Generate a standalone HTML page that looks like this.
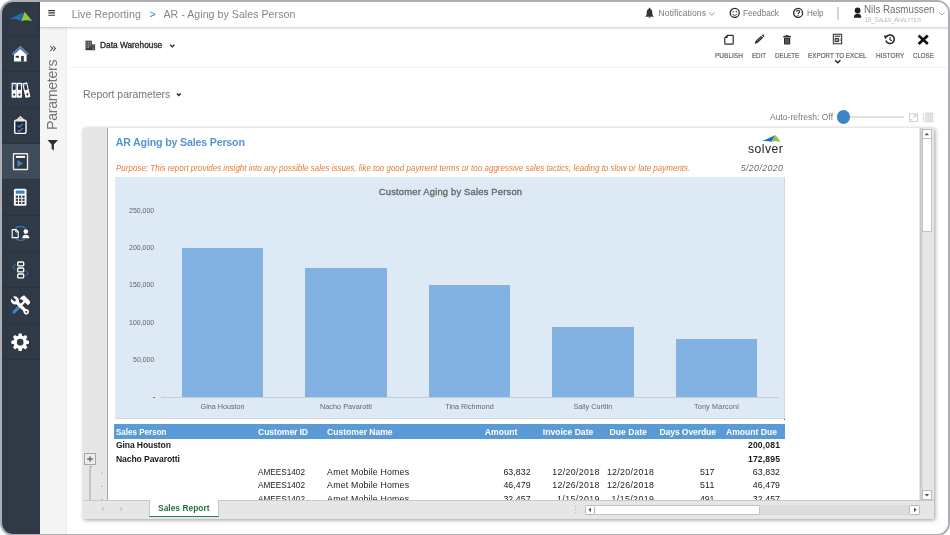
<!DOCTYPE html>
<html><head><meta charset="utf-8"><title>AR - Aging by Sales Person</title>
<style>
html,body{margin:0;padding:0;}
body{width:950px;height:535px;overflow:hidden;background:#fff;font-family:"Liberation Sans",sans-serif;position:relative;}
.t{position:absolute;white-space:nowrap;line-height:1;}
.abs{position:absolute;}
#frame{position:absolute;left:0;top:0;width:950px;height:535.6px;box-sizing:border-box;border:2px solid #adafb4;border-left-width:2.2px;border-bottom-width:2.6px;border-right-width:2.8px;border-radius:13px;overflow:hidden;background:#fff;}
#in{position:absolute;left:-2.2px;top:-2px;width:950px;height:535px;will-change:transform;}
#side{position:absolute;left:0;top:0;width:40px;height:535px;background:#2f3a46;}
#side .sel{position:absolute;left:0;top:144px;width:40px;height:35px;background:#3f4c5a;}
#side .dv{position:absolute;left:0;width:40px;height:1px;background:#2a343f;}
#params{position:absolute;left:40px;top:27px;width:27px;height:508px;background:#f5f5f5;border-right:1px solid #ececec;box-sizing:border-box;}
#top{position:absolute;left:40px;top:0;width:910px;height:27px;background:#fff;box-shadow:0 0.5px 2.5px rgba(0,0,0,0.22);}
#tbline{position:absolute;left:67px;top:67px;width:883px;height:1px;background:#f2f2f2;}
#widget{position:absolute;left:82.6px;top:128.1px;width:851.5px;height:391px;background:#e6e6e6;box-shadow:0.8px 0.8px 4px rgba(0,0,0,0.40);}
#grid{position:absolute;left:24.8px;top:0.4px;width:812.1px;height:371.2px;background:#fff;border-left:1px solid #a8a8a8;box-sizing:border-box;overflow:hidden;}
#gi{position:absolute;left:-108.4px;top:-128.5px;width:950px;height:535px;}
</style></head><body>
<div id="frame"><div id="in">
<div id="side"><div class="sel"></div>
<div class="dv" style="top:35px"></div><div class="dv" style="top:71px"></div><div class="dv" style="top:107px"></div><div class="dv" style="top:143px"></div><div class="dv" style="top:179px"></div><div class="dv" style="top:215px"></div><div class="dv" style="top:251px"></div><div class="dv" style="top:287px"></div><div class="dv" style="top:323px"></div><div class="dv" style="top:359px"></div>
<svg class="abs" style="left:0;top:0" width="40" height="400" viewBox="0 0 40 400">
<!-- logo -->
<path d="M9.1 19.6 L23.5 12.3 L20.3 20.7 C17.4 18.6 13 18.7 9.1 19.6Z" fill="#1f6fb8"/>
<path d="M24.5 11.8 L32.3 21 C28.6 19.9 24.6 20 21 21.1Z" fill="#8cc63f"/>
<!-- home -->
<path d="M12.2 54.4 L20.3 47 L28.4 54.4" fill="none" stroke="#5a8fc9" stroke-width="1.7" stroke-linejoin="miter"/>
<path d="M14 54.4 L20.3 49 L26.6 54.4 V61.6 H14Z" fill="#fff"/>
<rect x="15.7" y="55.8" width="3.3" height="1.9" fill="#2f3a46"/>
<rect x="21.1" y="56" width="2.7" height="5.6" fill="#2f3a46"/>
<!-- binders -->
<rect x="11.6" y="82.7" width="5.1" height="15" rx="0.7" fill="#fff"/><rect x="12.799999999999999" y="84.2" width="2.8" height="5.7" fill="#1f2c3b"/><rect x="12.799999999999999" y="84.2" width="2.8" height="2" fill="#3d74b0"/><circle cx="14.2" cy="94.60000000000001" r="1.05" fill="#1a222c"/>
<rect x="16.9" y="82.7" width="5.1" height="15" rx="0.7" fill="#fff"/><rect x="18.099999999999998" y="84.2" width="2.8" height="5.7" fill="#1f2c3b"/><rect x="18.099999999999998" y="84.2" width="2.8" height="2" fill="#3d74b0"/><circle cx="19.5" cy="94.60000000000001" r="1.05" fill="#1a222c"/>
<g transform="rotate(-13 26.4 90.2)"><rect x="23.8" y="82.6" width="5.1" height="15" rx="0.7" fill="#fff"/><rect x="25.0" y="84.1" width="2.8" height="5.7" fill="#1f2c3b"/><rect x="25.0" y="84.1" width="2.8" height="2" fill="#3d74b0"/><circle cx="26.400000000000002" cy="94.5" r="1.05" fill="#1a222c"/></g>
<!-- clipboard -->
<rect x="14.7" y="120.1" width="11.3" height="13.3" rx="1.5" fill="#1e2935" stroke="#fff" stroke-width="1.4"/>
<path d="M16.3 121.4 V119.7 L20.4 115.8 L24.5 119.7 V121.4Z" fill="#e2e5e8"/><circle cx="20.4" cy="118.2" r="0.55" fill="#59626c"/>
<path d="M17.5 125.6 L19.2 127.1 L23 123.7 M17.5 130 L19.2 131.5 L23 128.1" fill="none" stroke="#4a80bc" stroke-width="1.35"/>
<!-- report -->
<rect x="13.5" y="153.7" width="14" height="15.8" rx="0.5" fill="#2c3641" stroke="#e6e9ec" stroke-width="1.4"/>
<rect x="15.9" y="155.9" width="9.2" height="2" fill="#fff"/>
<path d="M17.4 160 L23.2 163.4 L17.4 166.8Z" fill="#4583c4"/>
<!-- calculator -->
<rect x="13.9" y="188.7" width="12.6" height="17.1" rx="1.6" fill="#fff"/>
<rect x="15.8" y="190.6" width="8.8" height="3.2" rx="0.6" fill="#3f7fc4"/>
<g fill="#2f3a46"><rect x="15.8" y="195.6" width="2.2" height="2.2"/><rect x="19.1" y="195.6" width="2.2" height="2.2"/><rect x="22.4" y="195.6" width="2.2" height="2.2"/>
<rect x="15.8" y="198.7" width="2.2" height="2.2"/><rect x="19.1" y="198.7" width="2.2" height="2.2"/><rect x="22.4" y="198.7" width="2.2" height="2.2"/>
<rect x="15.8" y="201.8" width="2.2" height="2.2"/><rect x="19.1" y="201.8" width="2.2" height="2.2"/><rect x="22.4" y="201.8" width="2.2" height="2.2"/></g>
<!-- doc-user -->
<circle cx="20.5" cy="233.4" r="7" fill="none" stroke="#3a78b8" stroke-width="1.3"/>
<rect x="11" y="228.8" width="8.2" height="9.6" fill="#2f3a46"/>
<rect x="22" y="228.6" width="8" height="10" fill="#2f3a46"/>
<path d="M12.2 229.6 H16 L18.2 231.8 V237.6 H12.2Z" fill="none" stroke="#fff" stroke-width="1.1"/><path d="M15.8 229.6 V232 H18.2" fill="none" stroke="#fff" stroke-width="0.9"/>
<circle cx="25.8" cy="231.6" r="2.3" fill="#fff"/><path d="M22.2 238.2 C22.2 233.6 29.4 233.6 29.4 238.2Z" fill="#fff"/>
<!-- flow -->
<g fill="none" stroke="#fff" stroke-width="1.35"><rect x="17.7" y="262" width="6" height="3.9" rx="0.9"/><rect x="17.7" y="268" width="6" height="3.9" rx="0.9"/><rect x="17.7" y="274" width="6" height="3.9" rx="0.9"/></g>
<path d="M15.8 265 C12.4 264.6 12.4 269.2 15.6 269.2" fill="none" stroke="#3a78b8" stroke-width="1"/>
<path d="M25.6 271.2 C28.8 271.2 28.8 275.4 25.8 275.2" fill="none" stroke="#3a78b8" stroke-width="1"/>
<!-- tools -->
<g transform="translate(20.3 305.8) rotate(45)"><rect x="-1.45" y="1.4" width="2.9" height="9" rx="1.2" fill="#3f86d0"/><rect x="-1.2" y="-6.4" width="2.4" height="8.4" fill="#fff"/><path d="M-4.8 -10.2 H2.6 C4 -10.2 5 -9.2 5 -7.6 V-5.8 H-2.2 C-3.4 -5.8 -4.4 -5.2 -5.2 -4 C-5.8 -6.2 -5.6 -8.4 -4.8 -10.2Z" fill="#fff"/></g>
<g transform="translate(20.3 305.8) rotate(-45)"><rect x="-1.65" y="-6.4" width="3.3" height="14.4" fill="#fff"/><circle cx="0" cy="-7.6" r="3.9" fill="#fff"/><rect x="-1.3" y="-12" width="2.6" height="5" fill="#2f3a46"/><circle cx="0" cy="8.4" r="2.7" fill="#fff"/><circle cx="0" cy="8.6" r="1" fill="#2f3a46"/></g>
<!-- gear -->
<g transform="translate(20.2 342.2)"><circle r="5" fill="none" stroke="#fff" stroke-width="3.3"/>
<g fill="#fff"><path d="M-1.5 -8.8 H1.5 L2 -5.6 H-2Z M-1.5 8.8 H1.5 L2 5.6 H-2Z"/><path d="M-1.5 -8.8 H1.5 L2 -5.6 H-2Z M-1.5 8.8 H1.5 L2 5.6 H-2Z" transform="rotate(45)"/><path d="M-1.5 -8.8 H1.5 L2 -5.6 H-2Z M-1.5 8.8 H1.5 L2 5.6 H-2Z" transform="rotate(90)"/><path d="M-1.5 -8.8 H1.5 L2 -5.6 H-2Z M-1.5 8.8 H1.5 L2 5.6 H-2Z" transform="rotate(135)"/></g>
</g>
</svg>
</div>
<div id="params"></div>
<div id="top"></div>
<div id="tbline"></div>
<svg class="abs" style="left:48px;top:9px" width="8" height="8" viewBox="0 0 8 8"><path d="M0.3 1.6H7 M0.3 3.9H7 M0.3 6.2H7" stroke="#333" stroke-width="1.1"/></svg>
<span class="t" style="left:71.70px;top:9.23px;font-size:10.6px;color:#858585;letter-spacing:0.065px;">Live Reporting</span>
<span class="t" style="left:149.50px;top:9.31px;font-size:10.5px;color:#3b82c4;">&gt;</span>
<span class="t" style="left:163.40px;top:9.23px;font-size:10.6px;color:#858585;letter-spacing:0.048px;">AR - Aging by Sales Person</span>
<svg class="abs" style="left:645.4px;top:6.6px" width="9.6" height="12" viewBox="0 0 11 12" preserveAspectRatio="none"><path d="M5.2 0.8 C5.9 0.8 6 1.4 6 1.8 C8 2.4 8.4 4.2 8.4 6 C8.4 7.6 9 8.6 9.8 9.2 V9.8 H0.6 V9.2 C1.4 8.6 2 7.6 2 6 C2 4.2 2.4 2.4 4.4 1.8 C4.4 1.4 4.5 0.8 5.2 0.8Z M4.2 10.3 H6.2 C6.2 11.5 4.2 11.5 4.2 10.3Z" fill="#333"/></svg>
<span class="t" style="left:658.60px;top:9.00px;font-size:8.5px;color:#777;letter-spacing:0.084px;">Notifications</span>
<svg class="abs" style="left:708px;top:11px" width="8" height="6" viewBox="0 0 8 6"><path d="M1.2 1.6 L3.9 4.2 L6.6 1.6" fill="none" stroke="#888" stroke-width="0.9"/></svg>
<svg class="abs" style="left:729px;top:6.6px" width="12" height="12" viewBox="0 0 12 12"><circle cx="5.7" cy="5.9" r="4.5" fill="none" stroke="#2b2b2b" stroke-width="1.3"/><circle cx="4.1" cy="4.7" r="0.75" fill="#333"/><circle cx="7.3" cy="4.7" r="0.75" fill="#333"/><path d="M3.3 6.8 C4.2 8.8 7.2 8.8 8.1 6.8" fill="none" stroke="#333" stroke-width="0.9"/></svg>
<span class="t" style="left:743.40px;top:9.00px;font-size:8.5px;color:#777;transform-origin:0 0;transform:scaleX(0.9617);">Feedback</span>
<svg class="abs" style="left:792px;top:6.6px" width="12" height="12" viewBox="0 0 12 12"><circle cx="6.1" cy="5.9" r="4.5" fill="none" stroke="#2b2b2b" stroke-width="1.3"/><path d="M4.5 4.8 C4.5 2.9 7.7 2.9 7.7 4.7 C7.7 5.8 6.1 5.8 6.1 7.1" fill="none" stroke="#333" stroke-width="1.1"/><rect x="5.5" y="7.9" width="1.2" height="1.1" fill="#333"/></svg>
<span class="t" style="left:807.40px;top:9.00px;font-size:8.5px;color:#777;transform-origin:0 0;transform:scaleX(0.9496);">Help</span>
<div class="abs" style="left:837.2px;top:6.5px;width:1.7px;height:13px;background:#d6d6d6"></div>
<svg class="abs" style="left:853px;top:6px" width="9" height="12" viewBox="0 0 9 12"><circle cx="4.6" cy="4.5" r="2.9" fill="#1e1e1e"/><path d="M1 11.7 C0 6.4 9.2 6.4 8.2 11.7Z" fill="#1e1e1e"/></svg>
<span class="t" style="left:863.90px;top:4.57px;font-size:10.2px;color:#6e6e6e;transform-origin:0 0;transform:scaleX(0.9581);">Nils Rasmussen</span>
<span class="t" style="left:864.5px;top:16.70px;font-size:6.5px;color:#b9b9b9;letter-spacing:-0.257px;"><span style="font-size:6.5px">19_S</span><span style="font-size:5.2px">ALES</span><span style="font-size:6.5px">_A</span><span style="font-size:5.2px">NALYTICS</span></span>
<svg class="abs" style="left:938px;top:11px" width="8" height="6" viewBox="0 0 8 6"><path d="M1.4 1.4 L4 4 L6.6 1.4" fill="none" stroke="#999" stroke-width="0.9"/></svg>
<svg class="abs" style="left:49px;top:45px" width="8" height="8" viewBox="0 0 8 8"><path d="M1.4 1.2 L3.6 3.6 L1.4 6 M4.2 1.2 L6.4 3.6 L4.2 6" fill="none" stroke="#555" stroke-width="1.1"/></svg>
<span class="t" style="left:56.9px;top:130.4px;font-size:14.2px;color:#747474;letter-spacing:-0.310px;transform-origin:0 0;transform:rotate(-90deg) translateY(-12.02px);">Parameters</span>
<svg class="abs" style="left:47px;top:139px" width="12" height="13" viewBox="0 0 12 13"><path d="M0.5 1 H11 L6.9 5.6 V11.6 L4.6 9.8 V5.6Z" fill="#2e2e2e"/></svg>
<svg class="abs" style="left:85px;top:40px" width="11" height="11" viewBox="0 0 11 11"><rect x="0.5" y="0.7" width="6.3" height="9.5" fill="#3a3a3a"/><rect x="6.2" y="4.4" width="3.9" height="5.8" fill="#3a3a3a"/><g fill="#ddd"><rect x="1.5" y="1.9" width="1" height="0.8"/><rect x="3.1" y="1.9" width="1" height="0.8"/><rect x="4.7" y="1.9" width="1" height="0.8"/><rect x="1.5" y="3.7" width="1" height="0.8"/><rect x="3.1" y="3.7" width="1" height="0.8"/><rect x="4.7" y="3.7" width="1" height="0.8"/><rect x="1.5" y="5.5" width="1" height="0.8"/><rect x="3.1" y="5.5" width="1" height="0.8"/><rect x="4.7" y="5.5" width="1" height="0.8"/><rect x="1.5" y="7.3" width="1" height="0.8"/><rect x="3.1" y="7.3" width="1" height="0.8"/><rect x="7.6" y="5.6" width="1" height="0.8"/></g><rect x="7.4" y="7.4" width="1.6" height="2.8" fill="#3f7fc4"/></svg>
<span class="t" style="left:100.30px;top:40.84px;font-size:8.7px;color:#2e2e2e;transform-origin:0 0;transform:scaleX(0.9590);-webkit-text-stroke:0.35px #2e2e2e;">Data Warehouse</span>
<svg class="abs" style="left:169px;top:43px" width="7" height="6" viewBox="0 0 7 6"><path d="M1.2 1.8 L3.3 3.9 L5.4 1.8" fill="none" stroke="#222" stroke-width="1.3"/></svg>
<span class="t" style="left:715.00px;top:51.94px;font-size:7.4px;color:#5e5e5e;transform-origin:0 0;transform:scaleX(0.8810);-webkit-text-stroke:0.2px #6a6a6a;">PUBLISH</span>
<span class="t" style="left:751.80px;top:51.94px;font-size:7.4px;color:#5e5e5e;transform-origin:0 0;transform:scaleX(0.8306);-webkit-text-stroke:0.2px #6a6a6a;">EDIT</span>
<span class="t" style="left:775.00px;top:51.94px;font-size:7.4px;color:#5e5e5e;transform-origin:0 0;transform:scaleX(0.8407);-webkit-text-stroke:0.2px #6a6a6a;">DELETE</span>
<span class="t" style="left:807.90px;top:51.94px;font-size:7.4px;color:#5e5e5e;transform-origin:0 0;transform:scaleX(0.8563);-webkit-text-stroke:0.2px #6a6a6a;">EXPORT TO EXCEL</span>
<span class="t" style="left:875.80px;top:51.94px;font-size:7.4px;color:#5e5e5e;transform-origin:0 0;transform:scaleX(0.8644);-webkit-text-stroke:0.2px #6a6a6a;">HISTORY</span>
<span class="t" style="left:912.60px;top:51.94px;font-size:7.4px;color:#5e5e5e;transform-origin:0 0;transform:scaleX(0.8291);-webkit-text-stroke:0.2px #6a6a6a;">CLOSE</span>
<svg class="abs" style="left:722px;top:33px" width="14" height="13" viewBox="0 0 14 13"><path d="M5.4 2.3 H10.4 C10.9 2.3 11.2 2.6 11.2 3.1 V10.4 C11.2 10.9 10.9 11.2 10.4 11.2 H3.6 C3.1 11.2 2.8 10.9 2.8 10.4 V4.9Z" fill="none" stroke="#2b2b2b" stroke-width="1.2" stroke-linejoin="round"/><path d="M5.6 2 V5.1 H2.5Z" fill="#2b2b2b"/></svg>
<svg class="abs" style="left:753.6px;top:34.4px" width="11" height="10.4" viewBox="0 0 13 13" preserveAspectRatio="none"><path d="M0.8 12.2 L1.8 8.8 L8.4 2.2 L10.8 4.6 L4.2 11.2Z" fill="#2b2b2b"/><path d="M3 9.8 L8.8 4" stroke="#bbb" stroke-width="0.7"/><path d="M9.2 1.6 L9.9 0.9 C10.3 0.5 10.8 0.5 11.2 0.9 L12.1 1.8 C12.5 2.2 12.5 2.7 12.1 3.1 L11.4 3.8Z" fill="#2b2b2b"/></svg>
<svg class="abs" style="left:782px;top:34px" width="11" height="12" viewBox="0 0 11 12"><path d="M1.3 3.4 V2.6 C1.3 2.1 1.7 1.8 2.2 1.8 H8 C8.5 1.8 8.9 2.1 8.9 2.6 V3.4Z" fill="#2b2b2b"/><rect x="3.9" y="1.2" width="2.4" height="1" fill="#2b2b2b"/><path d="M2 4 H8.2 V9.8 C8.2 10.2 7.9 10.5 7.5 10.5 H2.7 C2.3 10.5 2 10.2 2 9.8Z" fill="#2b2b2b"/><path d="M4.05 4.6 V9.8 M6.15 4.6 V9.8" stroke="#aaa" stroke-width="0.7"/></svg>
<svg class="abs" style="left:832.4px;top:33.4px" width="11.4" height="12.4" viewBox="0 0 12 13"><rect x="1.4" y="1.3" width="8.8" height="10" fill="none" stroke="#333" stroke-width="1.1"/><rect x="2.8" y="2.8" width="6" height="1.2" fill="#333"/><rect x="2.8" y="5.2" width="4.4" height="4.4" fill="#333"/><path d="M3.8 6.2 L6.2 8.6 M6.2 6.2 L3.8 8.6" stroke="#fff" stroke-width="0.7"/><rect x="7.8" y="6" width="1.4" height="0.8" fill="#333"/><rect x="7.8" y="7.8" width="1.4" height="0.8" fill="#333"/></svg>
<svg class="abs" style="left:834px;top:59px" width="8" height="6" viewBox="0 0 8 6"><path d="M1.2 1.2 L3.8 3.8 L6.4 1.2" fill="none" stroke="#222" stroke-width="1.4"/></svg>
<svg class="abs" style="left:883px;top:33px" width="14" height="13" viewBox="0 0 14 13"><path d="M3.2 4.2 A4.3 4.3 0 1 1 2.9 7.6" fill="none" stroke="#222" stroke-width="1.5"/><path d="M0.8 2.6 L4.8 2.8 L2.2 6.2Z" fill="#222"/><path d="M7 4.2 V6.8 L8.8 7.8" fill="none" stroke="#222" stroke-width="1.1"/></svg>
<svg class="abs" style="left:917px;top:34px" width="12" height="11" viewBox="0 0 12 11"><path d="M2.6 2.4 L9.8 9 M9.8 2.4 L2.6 9" stroke="#111" stroke-width="2.7" stroke-linecap="square"/></svg>
<span class="t" style="left:83.20px;top:89.06px;font-size:10.8px;color:#757575;transform-origin:0 0;transform:scaleX(0.9696);">Report parameters</span>
<svg class="abs" style="left:175px;top:92px" width="8" height="6" viewBox="0 0 8 6"><path d="M1.9 1.5 L3.8 3.4 L5.7 1.5" fill="none" stroke="#222" stroke-width="1.4"/></svg>
<span class="t" style="left:770.00px;top:113.00px;font-size:8.5px;color:#7a7a7a;letter-spacing:0.020px;">Auto-refresh: Off</span>
<div class="abs" style="left:848px;top:116.2px;width:56px;height:2px;background:#e0e0e0;border-radius:1px"></div>
<div class="abs" style="left:837px;top:110.4px;width:13.4px;height:13.4px;border-radius:50%;background:#3d84c8"></div>
<svg class="abs" style="left:908px;top:112px" width="12" height="11" viewBox="0 0 12 11"><rect x="1.6" y="1.8" width="8" height="7.6" fill="none" stroke="#cdcdcd" stroke-width="1"/><path d="M5.2 5.6 L8 2.9 M6 2.9 H8 V4.9" fill="none" stroke="#c4c4c4" stroke-width="1"/><rect x="2.6" y="7" width="1.6" height="1.4" fill="#cdcdcd"/></svg>
<svg class="abs" style="left:922px;top:112px" width="12" height="11" viewBox="0 0 12 11"><path d="M1.4 1 V10 M3.4 2.6 H11 M3.4 4.4 H11 M3.4 6.2 H11 M3.4 8 H11 M3.4 9.8 H11 M3.4 1 H11 M3.6 1 V10 M6 1 V10 M8.4 1 V10 M10.8 1 V10" fill="none" stroke="#cfcfcf" stroke-width="0.8"/></svg>
<div id="widget">
<div class="abs" style="left:1.7px;top:325px;width:9.8px;height:9.8px;border:1px solid #a6a6a6;background:#ebebeb;box-sizing:content-box"></div>
<svg class="abs" style="left:-0.9px;top:320.1px" width="26" height="52" viewBox="0 0 26 52"><path d="M5.2 11 H10.8 M8 8.2 V13.8" stroke="#666" stroke-width="1.3"/><path d="M8 18.5 V52 M8 18.5 H10" stroke="#9a9a9a" stroke-width="0.9" fill="none"/><rect x="19.6" y="24.6" width="1" height="1" fill="#8a8a8a"/><rect x="19.6" y="37.8" width="1" height="1" fill="#8a8a8a"/><rect x="19.6" y="51" width="1" height="1" fill="#8a8a8a"/></svg>
<div id="grid"><div id="gi">
<span class="t" style="left:115.70px;top:137.23px;font-size:10.6px;color:#5594d2;letter-spacing:-0.149px;font-weight:bold;">AR Aging by Sales Person</span>
<span class="t" style="left:115.70px;top:164.17px;font-size:8.3px;color:#e27d33;transform-origin:0 0;transform:scaleX(0.9661);font-style:italic;">Purpose: This report provides insight into any possible sales issues, like too good payment terms or too aggressive sales tactics, leading to slow or late payments.</span>
<svg class="abs" style="left:758px;top:133px" width="26" height="11" viewBox="0 0 26 11"><path d="M4 8.2 L17.2 2.3 L13.6 8.8 C10.4 7.8 7.2 7.8 4 8.2Z" fill="#1f6fb8"/><path d="M17.4 2.1 L22.8 9 C20 8.2 17 8.2 14 8.8Z" fill="#8cc63f"/></svg>
<span class="t" style="left:748.00px;top:142.87px;font-size:12.2px;color:#222;letter-spacing:0.451px;">solver</span>
<span class="t" style="left:740.70px;top:163.75px;font-size:8.8px;color:#6a6a6a;letter-spacing:0.394px;font-style:italic;">5/20/2020</span>
<div class="abs" style="left:115px;top:177.3px;width:669.8px;height:242.2px;background:#ddeaf6;box-sizing:border-box;border-right:1px solid #d3d9e0;border-bottom:1px solid #d3d9e0"></div><div class="abs" style="left:784px;top:418.7px;width:1.2px;height:1.2px;background:#555"></div>
<span class="t" style="left:378.80px;top:187.24px;font-size:9.4px;color:#636363;letter-spacing:0.195px;-webkit-text-stroke:0.3px #636363;">Customer Aging by Sales Person</span>
<div class="abs" style="left:152.8px;top:396.8px;width:2.2px;height:1px;background:#6a6a6a"></div>
<span class="t" style="left:132.60px;top:356.02px;font-size:7.3px;color:#636363;transform-origin:0 0;transform:scaleX(0.9584);">50,000</span>
<span class="t" style="left:128.80px;top:319.02px;font-size:7.3px;color:#636363;transform-origin:0 0;transform:scaleX(0.9550);">100,000</span>
<span class="t" style="left:128.80px;top:281.02px;font-size:7.3px;color:#636363;transform-origin:0 0;transform:scaleX(0.9550);">150,000</span>
<span class="t" style="left:128.80px;top:244.02px;font-size:7.3px;color:#636363;transform-origin:0 0;transform:scaleX(0.9550);">200,000</span>
<span class="t" style="left:128.80px;top:207.02px;font-size:7.3px;color:#636363;transform-origin:0 0;transform:scaleX(0.9550);">250,000</span>
<div class="abs" style="left:160.6px;top:397.2px;width:618px;height:1.1px;background:#c3cdd8"></div>
<div class="abs" style="left:181.70px;top:248.10px;width:81.8px;height:149.30px;background:#82b2e1"></div>
<span class="t" style="left:200.60px;top:403.11px;font-size:7.2px;color:#636363;">Gina Houston</span>
<div class="abs" style="left:305.15px;top:268.39px;width:81.8px;height:129.01px;background:#82b2e1"></div>
<span class="t" style="left:320.05px;top:403.11px;font-size:7.2px;color:#636363;letter-spacing:0.055px;">Nacho Pavarotti</span>
<div class="abs" style="left:428.60px;top:284.80px;width:81.8px;height:112.60px;background:#82b2e1"></div>
<span class="t" style="left:445.25px;top:403.11px;font-size:7.2px;color:#636363;letter-spacing:0.029px;">Tina Richmond</span>
<div class="abs" style="left:552.05px;top:327.26px;width:81.8px;height:70.14px;background:#82b2e1"></div>
<span class="t" style="left:573.45px;top:403.11px;font-size:7.2px;color:#636363;letter-spacing:0.049px;">Sally Curtlin</span>
<div class="abs" style="left:675.50px;top:339.27px;width:81.8px;height:58.13px;background:#82b2e1"></div>
<span class="t" style="left:693.90px;top:403.11px;font-size:7.2px;color:#636363;letter-spacing:0.198px;">Tony Marconi</span>
<div class="abs" style="left:114.2px;top:424.1px;width:670.6px;height:14.6px;background:#5b9bd5"></div>
<span class="t" style="left:116.00px;top:427.92px;font-size:8.6px;color:#fff;transform-origin:0 0;transform:scaleX(0.9349);font-weight:bold;">Sales Person</span>
<span class="t" style="left:258.10px;top:427.92px;font-size:8.6px;color:#fff;letter-spacing:-0.113px;font-weight:bold;">Customer ID</span>
<span class="t" style="left:327.10px;top:427.92px;font-size:8.6px;color:#fff;letter-spacing:-0.029px;font-weight:bold;">Customer Name</span>
<span class="t" style="left:484.70px;top:427.92px;font-size:8.6px;color:#fff;letter-spacing:0.064px;font-weight:bold;">Amount</span>
<span class="t" style="left:542.80px;top:427.92px;font-size:8.6px;color:#fff;letter-spacing:-0.015px;font-weight:bold;">Invoice Date</span>
<span class="t" style="left:609.50px;top:427.92px;font-size:8.6px;color:#fff;letter-spacing:0.018px;font-weight:bold;">Due Date</span>
<span class="t" style="left:659.50px;top:427.92px;font-size:8.6px;color:#fff;letter-spacing:-0.122px;font-weight:bold;">Days Overdue</span>
<span class="t" style="left:726.00px;top:427.92px;font-size:8.6px;color:#fff;letter-spacing:-0.013px;font-weight:bold;">Amount Due</span>
<span class="t" style="left:116.00px;top:440.92px;font-size:8.6px;color:#1a1a1a;letter-spacing:-0.125px;font-weight:bold;">Gina Houston</span>
<span class="t" style="left:748.00px;top:440.92px;font-size:8.6px;color:#1a1a1a;letter-spacing:0.152px;font-weight:bold;">200,081</span>
<span class="t" style="left:116.00px;top:454.92px;font-size:8.6px;color:#1a1a1a;letter-spacing:-0.105px;font-weight:bold;">Nacho Pavarotti</span>
<span class="t" style="left:748.00px;top:454.92px;font-size:8.6px;color:#1a1a1a;letter-spacing:0.152px;font-weight:bold;">172,895</span>
<span class="t" style="left:258.10px;top:467.75px;font-size:8.8px;color:#222;transform-origin:0 0;transform:scaleX(0.9328);">AMEES1402</span>
<span class="t" style="left:327.10px;top:467.75px;font-size:8.8px;color:#222;letter-spacing:0.173px;">Amet Mobile Homes</span>
<span class="t" style="left:503.40px;top:467.75px;font-size:8.8px;color:#222;letter-spacing:0.057px;">63,832</span>
<span class="t" style="left:552.20px;top:467.75px;font-size:8.8px;color:#222;letter-spacing:0.351px;">12/20/2018</span>
<span class="t" style="left:606.90px;top:467.75px;font-size:8.8px;color:#222;letter-spacing:0.329px;">12/20/2018</span>
<span class="t" style="left:700.10px;top:467.75px;font-size:8.8px;color:#222;letter-spacing:-0.191px;">517</span>
<span class="t" style="left:752.80px;top:467.75px;font-size:8.8px;color:#222;letter-spacing:0.057px;">63,832</span>
<span class="t" style="left:258.10px;top:480.75px;font-size:8.8px;color:#222;transform-origin:0 0;transform:scaleX(0.9328);">AMEES1402</span>
<span class="t" style="left:327.10px;top:480.75px;font-size:8.8px;color:#222;letter-spacing:0.173px;">Amet Mobile Homes</span>
<span class="t" style="left:503.40px;top:480.75px;font-size:8.8px;color:#222;letter-spacing:0.057px;">46,479</span>
<span class="t" style="left:552.20px;top:480.75px;font-size:8.8px;color:#222;letter-spacing:0.351px;">12/26/2018</span>
<span class="t" style="left:606.90px;top:480.75px;font-size:8.8px;color:#222;letter-spacing:0.329px;">12/26/2018</span>
<span class="t" style="left:700.10px;top:480.75px;font-size:8.8px;color:#222;letter-spacing:0.135px;">511</span>
<span class="t" style="left:752.80px;top:480.75px;font-size:8.8px;color:#222;letter-spacing:0.057px;">46,479</span>
<span class="t" style="left:258.10px;top:494.75px;font-size:8.8px;color:#222;transform-origin:0 0;transform:scaleX(0.9328);">AMEES1402</span>
<span class="t" style="left:327.10px;top:494.75px;font-size:8.8px;color:#222;letter-spacing:0.173px;">Amet Mobile Homes</span>
<span class="t" style="left:503.40px;top:494.75px;font-size:8.8px;color:#222;letter-spacing:0.057px;">32,457</span>
<span class="t" style="left:557.00px;top:494.75px;font-size:8.8px;color:#222;letter-spacing:0.406px;">1/15/2019</span>
<span class="t" style="left:611.50px;top:494.75px;font-size:8.8px;color:#222;letter-spacing:0.406px;">1/15/2019</span>
<span class="t" style="left:700.10px;top:494.75px;font-size:8.8px;color:#222;letter-spacing:-0.191px;">491</span>
<span class="t" style="left:752.80px;top:494.75px;font-size:8.8px;color:#222;letter-spacing:0.057px;">32,457</span>
</div></div>
<div class="abs" style="left:837.5px;top:0;width:3px;height:372px;background:linear-gradient(90deg,#c6c6c6,#dcdcdc)"></div>
<div class="abs" style="left:839.5px;top:1.2px;width:9.8px;height:9.4px;background:#fff;border:1px solid #bdbdbd;box-sizing:border-box"></div>
<svg class="abs" style="left:839.6px;top:1px" width="10" height="10" viewBox="0 0 10 10"><path d="M2.6 6.2 L4.8 3.8 L7 6.2Z" fill="#555"/></svg>
<div class="abs" style="left:839.5px;top:10.6px;width:9.8px;height:93.2px;background:#fff;border:1px solid #c2c2c2;border-top:none;box-sizing:border-box"></div>
<div class="abs" style="left:839.5px;top:362.1px;width:9.8px;height:9.5px;background:#fff;border:1px solid #bdbdbd;box-sizing:border-box"></div>
<svg class="abs" style="left:839.6px;top:361.9px" width="10" height="10" viewBox="0 0 10 10"><path d="M2.6 4 L4.8 6.4 L7 4Z" fill="#555"/></svg>
<div class="abs" style="left:0;top:371.6px;width:851.3px;height:1px;background:#c9c9c9"></div>
<div class="abs" style="left:66.6px;top:372px;width:70px;height:16.6px;background:#fff;border-left:1px solid #c6c6c6;border-right:1px solid #c6c6c6;border-bottom:1.7px solid #2d7d52;box-sizing:border-box"></div>
<svg class="abs" style="left:14px;top:376px" width="30" height="10" viewBox="0 0 30 10"><path d="M6.6 2.6 L4.2 5 L6.6 7.4Z M23.4 2.6 L25.8 5 L23.4 7.4Z" fill="#c2c2c2"/></svg>
<span class="t" style="left:75.20px;top:375.75px;font-size:8.8px;color:#217346;transform-origin:0 0;transform:scaleX(0.9592);font-weight:bold;">Sales Report</span>
<svg class="abs" style="left:491px;top:376px" width="4" height="12" viewBox="0 0 4 12"><rect x="1.2" y="2.2" width="1" height="1" fill="#aaa"/><rect x="1.2" y="5" width="1" height="1" fill="#aaa"/><rect x="1.2" y="7.8" width="1" height="1" fill="#aaa"/></svg>
<div class="abs" style="left:502.3px;top:376.5px;width:335px;height:10.1px;background:#dcdcdc"></div>
<div class="abs" style="left:502.3px;top:376.5px;width:10.1px;height:10.1px;background:#fff;border:1px solid #b8b8b8;border-radius:1.5px;box-sizing:border-box"></div>
<svg class="abs" style="left:502.4px;top:376.7px" width="10" height="10" viewBox="0 0 10 10"><path d="M6 2.4 L3.4 4.8 L6 7.2Z" fill="#555"/></svg>
<div class="abs" style="left:512.4px;top:376.5px;width:164.8px;height:10.1px;background:#fff;border:1px solid #c2c2c2;border-left:none;border-radius:0 1.5px 1.5px 0;box-sizing:border-box"></div>
<div class="abs" style="left:826.8px;top:376.5px;width:10.2px;height:10.1px;background:#fff;border:1px solid #b8b8b8;border-radius:1.5px;box-sizing:border-box"></div>
<svg class="abs" style="left:827px;top:376.7px" width="10" height="10" viewBox="0 0 10 10"><path d="M4 2.4 L6.6 4.8 L4 7.2Z" fill="#555"/></svg>
</div>
</div></div>
</body></html>
